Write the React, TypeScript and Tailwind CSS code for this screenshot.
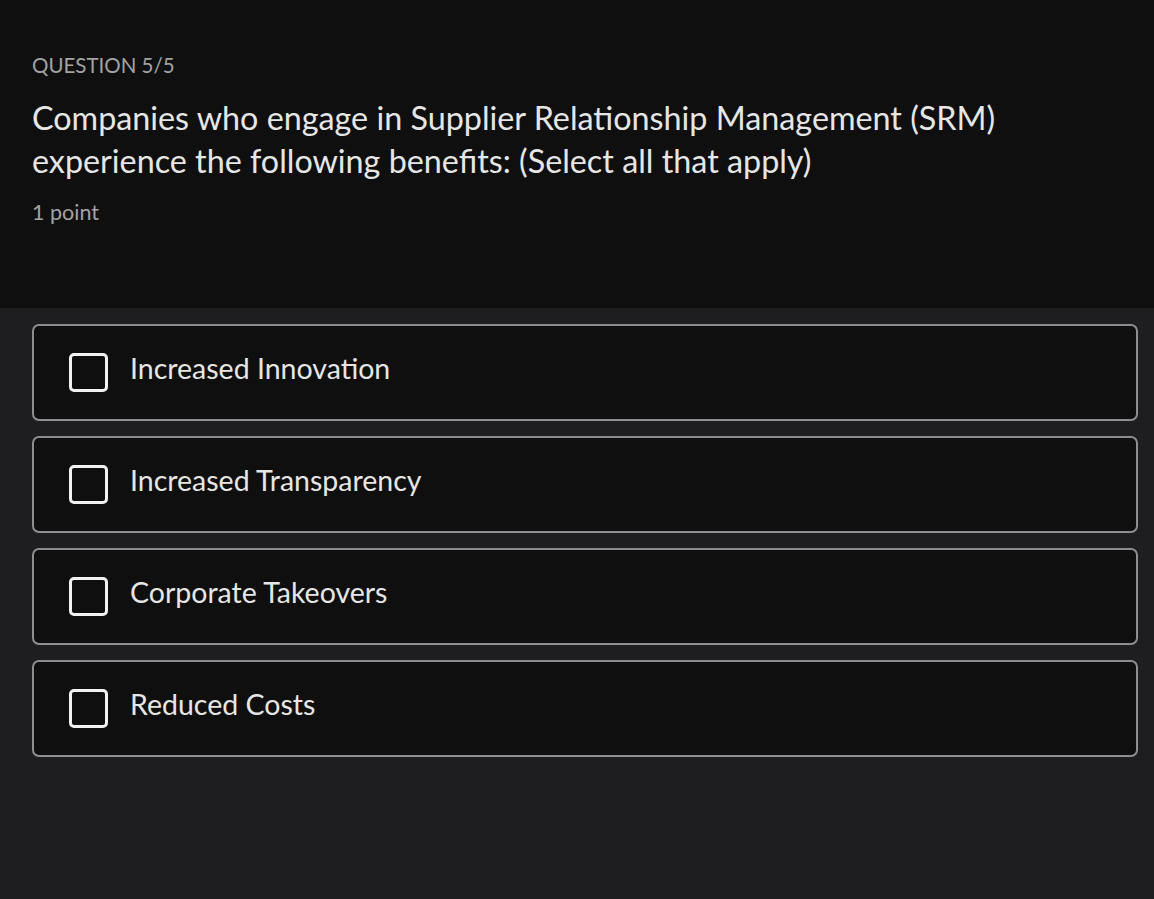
import React from 'react';

const options = [
  'Increased Innovation',
  'Increased Transparency',
  'Corporate Takeovers',
  'Reduced Costs',
];

export default function App() {
  const [checked, setChecked] = React.useState<boolean[]>(options.map(() => false));

  return (
    <div
      className="min-h-[899px] w-full bg-[#1e1e20] text-[#e6e6e6]"
      style={{ fontFamily: 'Lato, "Noto Sans", sans-serif' }}
    >
      <div className="h-[308px] bg-[#0f0f0f] px-8 pt-[50px]">
        <div className="text-[20.5px] leading-[30px] text-[#a3a3a3]">QUESTION 5/5</div>
        <h1 className="mt-[16px] text-[32.3px] leading-[43px] text-[#e6e6e6] max-w-[1020px]">
          Companies who engage in Supplier Relationship Management (SRM) experience the following
          benefits: (Select all that apply)
        </h1>
        <div className="mt-[16px] text-[21.5px] leading-[28px] text-[#a3a3a3]">1 point</div>
      </div>

      <div className="flex flex-col gap-[15px] px-8 pt-4 pr-4">
        {options.map((opt, i) => (
          <label
            key={opt}
            className="flex h-[97px] cursor-pointer items-center gap-[21px] rounded-[7px] border-2 border-[#8e8e90] bg-[#0f0f0f] pl-[35px]"
          >
            <input
              type="checkbox"
              className="sr-only"
              checked={checked[i]}
              onChange={() => setChecked(checked.map((c, j) => (j === i ? !c : c)))}
            />
            <span className="h-[39px] w-[39px] shrink-0 rounded-[5px] border-[3px] border-[#f2f2f2]" />
            <span className="pb-[8px] pl-[1px] text-[28.5px] leading-none text-[#e6e6e6]">{opt}</span>
          </label>
        ))}
      </div>
    </div>
  );
}
